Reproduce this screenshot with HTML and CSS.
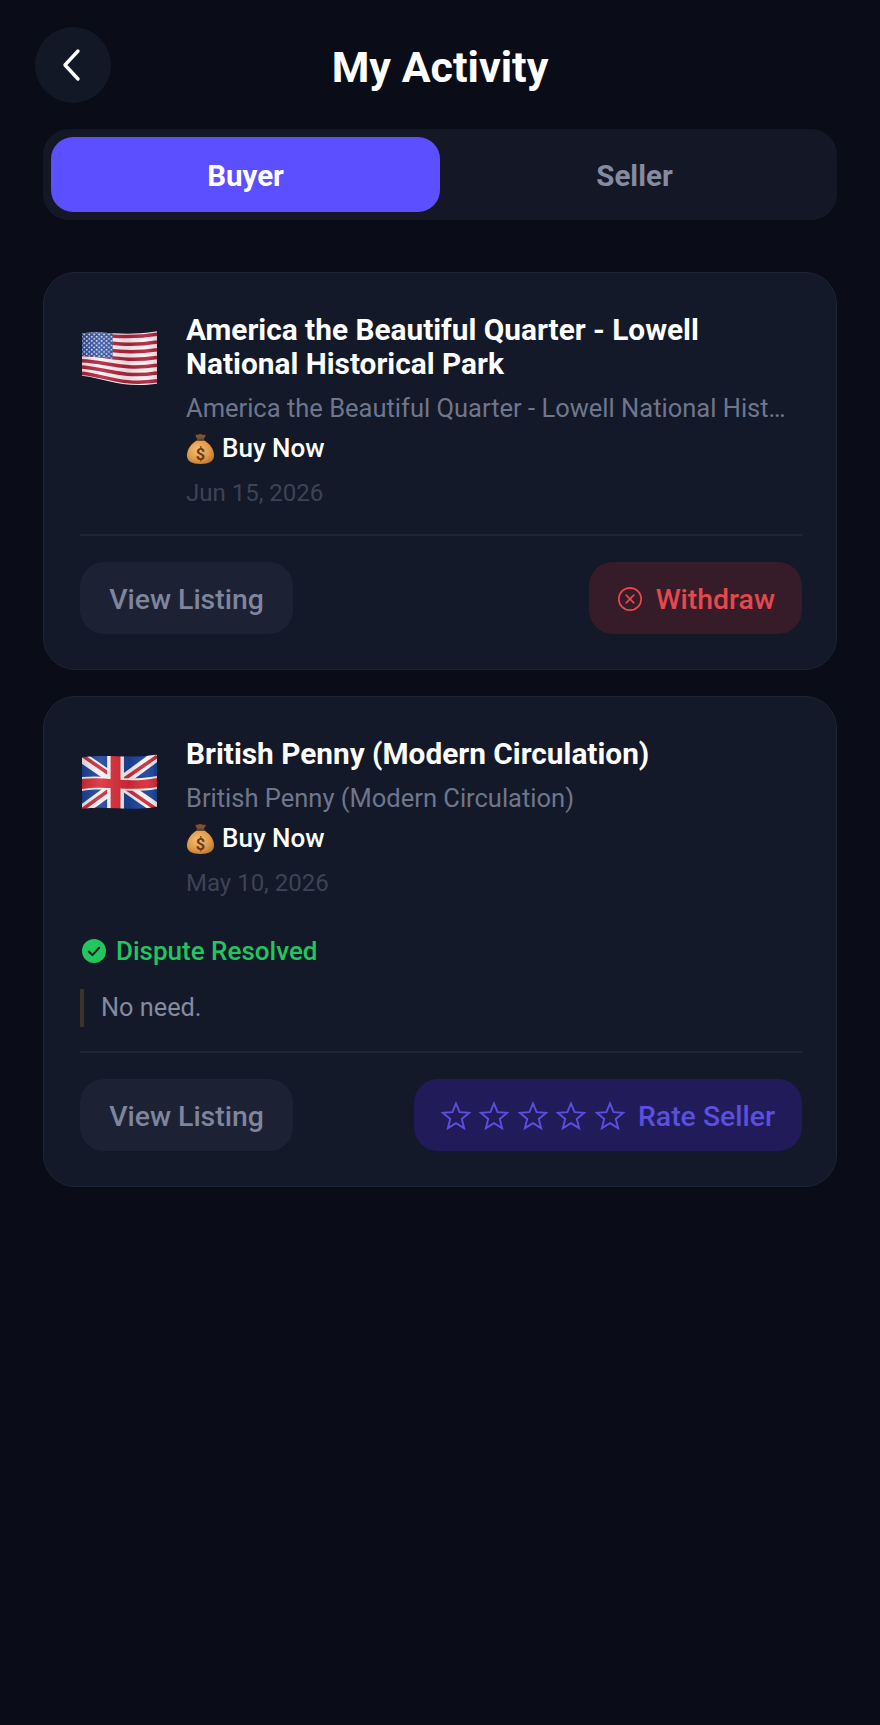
FILE: index.html
```html
<!DOCTYPE html>
<html lang="en">
<head>
<meta charset="utf-8">
<title>My Activity</title>
<link rel="stylesheet" href="styles.css">
</head>
<body>
<svg class="defs" width="0" height="0" aria-hidden="true">
  <defs>
    <symbol id="bag" viewBox="0 0 30 34">
      <path d="M10 2.500c2 1 3-1 5-.5s3 1.500 5 .5c1 1-1 4-2.500 5.500h-5C11 6.500 9.500 4 10 2.500z" fill="#7d5230"/>
      <path d="M11.500 8.500C6 11.500 1 17.500 1 24c0 6.500 5 9 14 9s14-2.500 14-9c0-6.500-5-12.500-10.500-15.500z" fill="url(#bagfill)"/>
      <rect x="11" y="6.800" width="8" height="2.200" rx="1" fill="#5e3c22"/>
      <text x="15" y="28.500" text-anchor="middle" class="bag-sign">$</text>
    </symbol>
    <radialGradient id="bagfill" cx=".42" cy=".4" r=".7">
      <stop offset="0" stop-color="#f4c27c"/>
      <stop offset=".65" stop-color="#dd9645"/>
      <stop offset="1" stop-color="#b66f2c"/>
    </radialGradient>
    <symbol id="star" viewBox="0 0 30 30">
      <path d="M15 2.500l3.600 8.700 9.400.7-7.200 6 2.300 9.200-8.100-5-8.100 5 2.300-9.200-7.200-6 9.400-.7z" fill="none" stroke="currentColor" stroke-width="1.900" stroke-linejoin="miter"/>
    </symbol>
    <pattern id="stars" x="1" y="1" width="5" height="4.400" patternUnits="userSpaceOnUse">
      <circle cx="1.300" cy="1.200" r="1" fill="#eef1fa"/>
      <circle cx="3.800" cy="3.400" r="1" fill="#eef1fa"/>
    </pattern>
    <linearGradient id="fold" x1="0" y1="0" x2="1" y2="0">
      <stop offset="0" stop-color="#000" stop-opacity=".14"/>
      <stop offset=".25" stop-color="#fff" stop-opacity=".1"/>
      <stop offset=".62" stop-color="#000" stop-opacity=".1"/>
      <stop offset=".85" stop-color="#fff" stop-opacity=".06"/>
      <stop offset="1" stop-color="#000" stop-opacity=".14"/>
    </linearGradient>
    <clipPath id="ukclip">
      <path d="M0 1C25-3 45 3 76-2V51C50 56 25 50 0 53z"/>
    </clipPath>
    <filter id="soft" x="-5%" y="-5%" width="110%" height="110%">
      <feGaussianBlur stdDeviation=".35"/>
    </filter>
  </defs>
</svg>

<header class="topbar">
  <button class="back" aria-label="Back">
    <svg width="22" height="34" viewBox="0 0 22 34"><path d="M18 3L5 17l13 14" fill="none" stroke="#fff" stroke-width="3.400" stroke-linecap="round" stroke-linejoin="round"/></svg>
  </button>
  <h1 class="page-title">My Activity</h1>
</header>

<nav class="tabs">
  <div class="tab tab-active">Buyer</div>
  <div class="tab">Seller</div>
</nav>

<main class="list">
  <article class="card">
    <div class="item">
      <svg class="flag" viewBox="0 0 76 54" aria-label="United States flag">
        <g filter="url(#soft)">
          <path d="M0 1C25-2 40 5 76-1V52C40 57 25 47 0 44z" fill="#fbf1f2"/>
          <g fill="none" stroke="#b0233c" stroke-width="3.500">
            <path d="M0 3.600C25 .8 40 7.900 76 1.900"/>
            <path d="M0 9.900C25 8 40 15.600 76 9.800"/>
            <path d="M0 16.200C25 15.300 40 23.300 76 17.600"/>
            <path d="M0 22.500C25 22.500 40 31 76 25.500"/>
            <path d="M0 28.800C25 29.700 40 38.700 76 33.400"/>
            <path d="M0 35.100C25 37 40 46.400 76 41.200"/>
            <path d="M0 41.400C25 44.200 40 54.100 76 49.100"/>
          </g>
          <path d="M0 1C10 0 20 0 31 1V27C20 25.500 10 24.500 0 24z" fill="#2a4a9c"/>
          <path d="M0 1C10 0 20 0 31 1V27C20 25.500 10 24.500 0 24z" fill="url(#stars)"/>
          <path d="M0 1C25-2 40 5 76-1V52C40 57 25 47 0 44z" fill="url(#fold)"/>
        </g>
      </svg>
      <div class="info">
        <h2 class="item-title">America the Beautiful Quarter - Lowell National Historical Park</h2>
        <p class="item-sub">America the Beautiful Quarter - Lowell National Historical Park</p>
        <p class="item-type"><svg class="bag"><use href="#bag"/></svg>Buy Now</p>
        <p class="item-date">Jun 15, 2026</p>
      </div>
    </div>
    <div class="actions">
      <button class="btn btn-view">View Listing</button>
      <button class="btn btn-withdraw">
        <svg width="26" height="26" viewBox="0 0 26 26"><circle cx="13" cy="13" r="11.200" fill="none" stroke="currentColor" stroke-width="1.700"/><path d="M9.200 9.200l7.600 7.600M16.800 9.200l-7.600 7.600" stroke="currentColor" stroke-width="1.700" stroke-linecap="round"/></svg>
        Withdraw
      </button>
    </div>
  </article>

  <article class="card">
    <div class="item">
      <svg class="flag" viewBox="0 0 76 54" aria-label="United Kingdom flag">
        <g clip-path="url(#ukclip)">
          <g filter="url(#soft)">
            <rect y="-3" width="76" height="60" fill="#1c4299"/>
            <path d="M0 1L76 53M76-1L0 55" stroke="#f7f2f3" stroke-width="11"/>
            <path d="M0-1L38 25M76 0L40 25M0 54L36 28M76 54L38 28" stroke="#c92b3a" stroke-width="3.600"/>
            <path d="M34-3V57" stroke="#f7f2f3" stroke-width="17"/>
            <path d="M0 21C25 18 45 26 76 20V33C45 38 25 31 0 35z" fill="#f7f2f3"/>
            <path d="M34-3V57" stroke="#d92b36" stroke-width="10"/>
            <path d="M0 23C25 20 45 28 76 22V31C45 36 25 29 0 33z" fill="#d92b36"/>
            <path d="M0 1C25-3 45 3 76-2V51C50 56 25 50 0 53z" fill="url(#fold)"/>
          </g>
        </g>
      </svg>
      <div class="info">
        <h2 class="item-title">British Penny (Modern Circulation)</h2>
        <p class="item-sub">British Penny (Modern Circulation)</p>
        <p class="item-type"><svg class="bag"><use href="#bag"/></svg>Buy Now</p>
        <p class="item-date">May 10, 2026</p>
      </div>
    </div>
    <div class="status">
      <svg width="24" height="24" viewBox="0 0 24 24"><circle cx="12" cy="12" r="12" fill="#22c55e"/><path d="M6.800 12.500l3.600 3.600 6.800-7.400" fill="none" stroke="#131928" stroke-width="2" stroke-linecap="round" stroke-linejoin="round"/></svg>
      Dispute Resolved
    </div>
    <blockquote class="note">No need.</blockquote>
    <div class="actions">
      <button class="btn btn-view">View Listing</button>
      <button class="btn btn-rate">
        <span class="stars">
          <svg class="star"><use href="#star"/></svg>
          <svg class="star"><use href="#star"/></svg>
          <svg class="star"><use href="#star"/></svg>
          <svg class="star"><use href="#star"/></svg>
          <svg class="star"><use href="#star"/></svg>
        </span>
        Rate Seller
      </button>
    </div>
  </article>
</main>
</body>
</html>
```

FILE: styles.css
```css
* { box-sizing: border-box; }

html, body {
  margin: 0;
  padding: 0;
}

body {
  min-height: 1725px;
  background: #0a0d18;
  font-family: Roboto, "Liberation Sans", sans-serif;
  color: #fff;
}

.defs { position: absolute; }

.bag-sign {
  font: 700 17px Roboto, sans-serif;
  fill: #6b3d12;
}

.topbar {
  display: grid;
  grid-template-columns: 76px 1fr 76px;
  align-items: start;
  padding: 27px 35px 0;
}

.back {
  width: 76px;
  height: 76px;
  border: 0;
  border-radius: 50%;
  background: #131826;
  display: flex;
  align-items: center;
  justify-content: center;
  padding: 0 4px 0 0;
}

.page-title {
  margin: 0;
  text-align: center;
  font-size: 43px;
  line-height: 80px;
  font-weight: 700;
}

.tabs {
  display: grid;
  grid-template-columns: 1fr 1fr;
  margin: 22px 43px 0;
  padding: 8px;
  height: 91px;
  border-radius: 26px;
  background: #141826;
}

.tab {
  display: flex;
  align-items: center;
  justify-content: center;
  padding-top: 2px;
  border-radius: 22px;
  font-size: 29.500px;
  font-weight: 700;
  color: #868b9f;
}

.tab-active {
  background: #5b4fff;
  color: #fff;
}

.list {
  display: flex;
  flex-direction: column;
  gap: 26px;
  margin: 52px 43px 0;
}

.card {
  padding: 40px 34px 35px 36px;
  border: 1px solid #1e2433;
  border-radius: 32px;
  background: #131928;
}

.item {
  display: flex;
  gap: 29px;
  padding-right: 9px;
}

.flag {
  flex: none;
  width: 75px;
  height: 54px;
  margin: 19px 0 0 2px;
  overflow: visible;
}

.info {
  flex: 1;
  min-width: 0;
}

.item-title {
  margin: 0;
  font-size: 29.800px;
  line-height: 34px;
  font-weight: 700;
}

.item-sub {
  margin: 10px 0 0;
  font-size: 25.500px;
  line-height: 34px;
  color: #6f768c;
  white-space: nowrap;
  overflow: hidden;
  text-overflow: ellipsis;
}

.item-type {
  display: flex;
  align-items: center;
  gap: 7px;
  margin: 6px 0 0;
  font-size: 26px;
  line-height: 34px;
  font-weight: 500;
}

.bag {
  width: 29px;
  height: 33px;
}

.item-date {
  margin: 11px 0 0;
  font-size: 24px;
  line-height: 34px;
  color: #3d4355;
}

.status {
  display: flex;
  align-items: center;
  gap: 10px;
  margin: 34px 0 0 2px;
  font-size: 26px;
  line-height: 34px;
  font-weight: 500;
  color: #22c55e;
}

.note {
  margin: 21px 0 0;
  padding-left: 17px;
  border-left: 4px solid #3a3328;
  font-size: 25.300px;
  line-height: 38px;
  color: #858b9f;
}

.actions {
  display: flex;
  justify-content: space-between;
  margin-top: 24px;
  padding-top: 26px;
  border-top: 2px solid #1f2534;
}

.btn {
  display: flex;
  align-items: center;
  height: 72px;
  padding: 2px 27px 0;
  border: 0;
  border-radius: 24px;
  font-family: inherit;
  font-size: 28.400px;
  font-weight: 500;
}

.btn-view {
  width: 213px;
  justify-content: center;
  padding: 2px 0 0;
  background: #1c2233;
  color: #7f859c;
}

.btn-withdraw {
  gap: 13px;
  padding-left: 28px;
  background: #351c28;
  color: #e5484d;
}

.btn-rate {
  gap: 13px;
  background: #211b5a;
  color: #5b4fe0;
}

.stars {
  display: flex;
  gap: 8.500px;
}

.star {
  width: 30px;
  height: 30px;
}
```
